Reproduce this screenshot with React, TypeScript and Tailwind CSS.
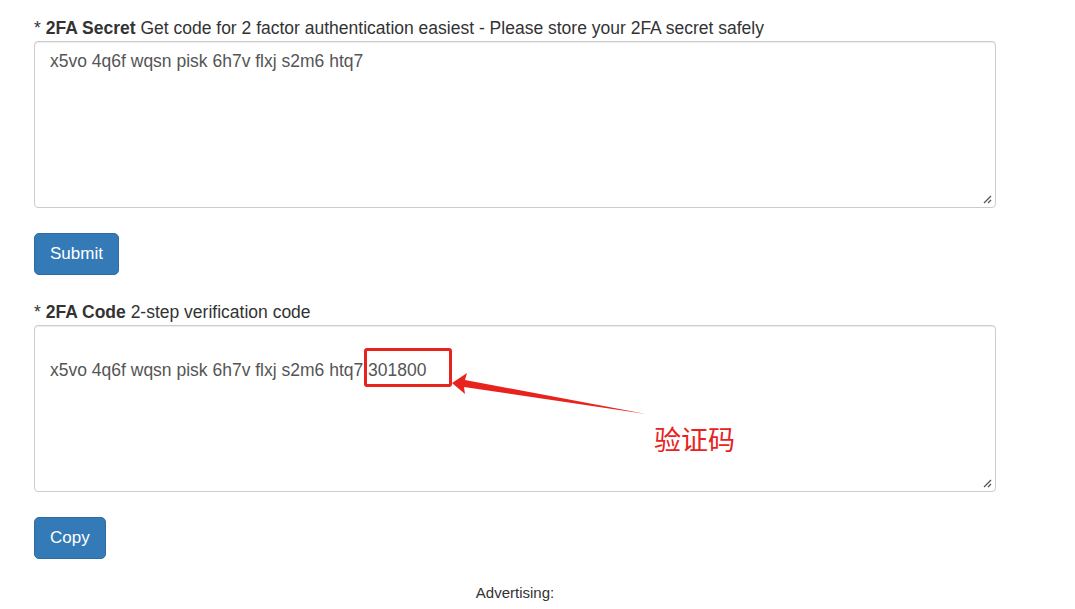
import React from "react";

const font = { fontFamily: '"Liberation Sans", Arial, sans-serif' };

function Resize() {
  return (
    <svg className="absolute right-[3px] bottom-[3px]" width="9" height="9" viewBox="0 0 9 9">
      <path d="M8 1 L1 8 M8 5 L5 8" stroke="#555" strokeWidth="1.3" />
    </svg>
  );
}

function Field({ label, rest, children, topPad }: { label: string; rest: string; children: React.ReactNode; topPad: string }) {
  return (
    <div className="flex flex-col gap-[3px]">
      <div className="text-[17.5px] leading-[20px] text-[#333]">
        * <b>{label}</b> {rest}
      </div>
      <div
        className={`relative h-[167px] border border-[#ccc] rounded-[4px] shadow-[inset_0_1px_1px_rgba(0,0,0,0.075)] px-[15px] text-[17.5px] leading-[25px] text-[#555] ${topPad}`}
      >
        {children}
        <Resize />
      </div>
    </div>
  );
}

function Btn({ children }: { children: React.ReactNode }) {
  return (
    <div className="flex">
      <button className="h-[42px] px-[15px] bg-[#337ab7] border border-[#2e6da4] rounded-[5px] text-white text-[17px]">
        {children}
      </button>
    </div>
  );
}

export default function App() {
  return (
    <div className="relative w-[1075px] h-[609px] bg-white overflow-hidden" style={font}>
      <div className="ml-[34px] w-[962px] pt-[18px] flex flex-col">
        <Field label="2FA Secret" rest="Get code for 2 factor authentication easiest - Please store your 2FA secret safely" topPad="pt-[7px]">
          x5vo 4q6f wqsn pisk 6h7v flxj s2m6 htq7
        </Field>
        <div className="pt-[25px] pb-[27px]">
          <Btn>Submit</Btn>
        </div>
        <Field label="2FA Code" rest="2-step verification code" topPad="pt-[32px]">
          x5vo 4q6f wqsn pisk 6h7v flxj s2m6 htq7 301800
        </Field>
        <div className="pt-[25px] pb-[25px]">
          <Btn>Copy</Btn>
        </div>
        <div className="text-center text-[15px] leading-[18px] text-[#333]">Advertising:</div>
      </div>
      {/* annotation */}
      <div className="absolute left-[364px] top-[348px] w-[88px] h-[39px] border-[3px] border-[#e8231d] rounded-[3px]" />
      <svg className="absolute left-0 top-0" width="1075" height="609">
        <polygon points="452,383 467,373 465,380 646,414 464,387 465,394" fill="#e8231d" />
      </svg>
      <div
        className="absolute left-[654px] top-[421px] text-[27px] leading-[36px] text-[#e8231d]"
        style={{ fontFamily: '"Noto Sans CJK SC", sans-serif' }}
      >
        验证码
      </div>
    </div>
  );
}
